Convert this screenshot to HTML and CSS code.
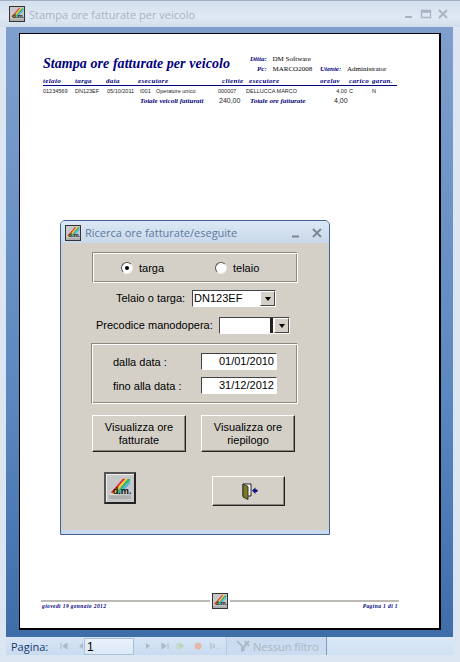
FILE: index.html
```html
<!DOCTYPE html>
<html lang="it">
<head>
<meta charset="utf-8">
<title>Stampa ore fatturate per veicolo</title>
<link rel="stylesheet" href="styles.css">
</head>
<body>
<svg class="defs" width="0" height="0" aria-hidden="true">
  <symbol id="dm" viewBox="0 0 24 24">
    <rect x="0" y="0" width="24" height="24" fill="#c8c8c8"/>
    <path d="M1 19 L17 2 L23 2 L23 6 L8 19 Z" fill="#e8e8e8"/>
    <path d="M2 17 L15 2 L18 2 L4 18 Z" fill="#e03040"/>
    <path d="M4 18 L18 2 L20.500 2 L7 18 Z" fill="#f0d020"/>
    <path d="M7 18 L20.500 2 L23 2 L23 4 L10 18 Z" fill="#40b070"/>
    <path d="M10 18 L23 4 L23 7 L13 18 Z" fill="#50b8e8"/>
    <text x="4" y="18" class="dm-text">d.m.</text>
    <rect x="0" y="20" width="24" height="4" fill="#b0b0b0"/>
  </symbol>
</svg>

<div class="window">
  <header class="titlebar">
    <span class="app-icon"><svg class="dm-svg"><use href="#dm"/></svg></span>
    <span class="title-text">Stampa ore fatturate per veicolo</span>
    <span class="win-controls">
      <svg class="ctl" viewBox="0 0 12 12"><path d="M2 9h7" stroke="#a9b4c2" stroke-width="2"/></svg>
      <svg class="ctl" viewBox="0 0 12 12"><path d="M1.500 2.500h9v7h-9z M1.500 4h9" fill="none" stroke="#a9b4c2" stroke-width="1.300"/></svg>
      <svg class="ctl" viewBox="0 0 12 12"><path d="M2 2l8 8M10 2l-8 8" stroke="#a9b4c2" stroke-width="2"/></svg>
    </span>
  </header>

  <main class="workspace">
    <section class="page">
      <div class="report-head">
        <h1 class="report-title">Stampa ore fatturate per veicolo</h1>
        <div class="meta">
          <div class="meta-line meta-first"><i>Ditta:</i> <span>DM Software</span></div>
          <div class="meta-line meta-second"><i>Pc:</i> <span>MARCO2008</span> <i class="gap">Utente:</i> <span>Administrator</span></div>
        </div>
      </div>
      <div class="rgrid rhead">
        <span>telaio</span><span>targa</span><span>data</span><span>esecutore</span><span>cliente</span><span>esecutore</span><span>orelav</span><span>carico</span><span>garan.</span>
      </div>
      <div class="rgrid rdata">
        <span>01234569</span><span>DN123EF</span><span>05/10/2011</span><span>I001</span><span>Operatore unico</span><span>000007</span><span>DELLUCCA MARCO</span><span class="num">4,00</span><span class="empty"></span><span>C</span><span>N</span>
      </div>
      <div class="rgrid rtotal">
        <i class="tot-label tot-a">Totale veicoli fatturati</i><span>240,00</span><i class="tot-label">Totale ore fatturate</i><span>4,00</span>
      </div>
      <footer class="report-foot">
        <div class="foot-rule">
          <span class="rule"></span>
          <svg class="dm-svg foot-logo"><use href="#dm"/></svg>
          <span class="rule"></span>
        </div>
        <div class="foot-text"><i>giovedì 19 gennaio 2012</i><i>Pagina 1 di 1</i></div>
      </footer>
    </section>
  </main>

  <nav class="navbar">
    <span class="nav-label">Pagina:</span>
    <span class="nav-arrows nav-left">
      <svg class="nav-ic" viewBox="0 0 10 10"><path d="M2 2v6M8 2L4 5l4 3z" fill="#a9b8cc" stroke="#a9b8cc"/></svg>
      <svg class="nav-ic" viewBox="0 0 10 10"><path d="M7 2L3 5l4 3z" fill="#a9b8cc"/></svg>
    </span>
    <span class="nav-input">1</span>
    <span class="nav-arrows nav-right">
      <svg class="nav-ic" viewBox="0 0 10 10"><path d="M3 2l4 3-4 3z" fill="#a9b8cc"/></svg>
      <svg class="nav-ic" viewBox="0 0 10 10"><path d="M8 2v6M2 2l4 3-4 3z" fill="#a9b8cc" stroke="#a9b8cc"/></svg>
      <svg class="nav-ic" viewBox="0 0 10 10"><path d="M1 2v6M3 2l5 3-5 3z" fill="#bcd6b8" stroke="#bcd6b8"/></svg>
      <svg class="nav-ic" viewBox="0 0 10 10"><circle cx="5" cy="5" r="3.500" fill="#e5b9a8"/></svg>
      <svg class="nav-ic" viewBox="0 0 10 10"><path d="M2 2v6M5 3v4M8 8h1" stroke="#a9b8cc" stroke-width="1.200"/></svg>
    </span>
    <span class="nav-filter">
      <svg class="filter-ic" viewBox="0 0 14 14"><path d="M1 2l5 5v5l2-1V7l2-2M9 2l4 5M13 2L9 7" fill="none" stroke="#a9b4c2" stroke-width="1.600"/></svg>
      <span>Nessun filtro</span>
    </span>
    <span class="nav-rest"></span>
  </nav>

  <div class="dialog">
    <div class="dlg-title">
      <span class="app-icon dlg-icon"><svg class="dm-svg"><use href="#dm"/></svg></span>
      <span class="dlg-title-text">Ricerca ore fatturate/eseguite</span>
      <span class="dlg-ctls">
        <svg class="ctl" viewBox="0 0 12 12"><path d="M2 9.500h7" stroke="#7d8794" stroke-width="2"/></svg>
        <svg class="ctl" viewBox="0 0 12 12"><path d="M2 2l8 8M10 2l-8 8" stroke="#7d8794" stroke-width="2"/></svg>
      </span>
    </div>
    <div class="dlg-body">
      <div class="group radio-group">
        <label class="radio"><span class="dot on"></span>targa</label>
        <label class="radio"><span class="dot"></span>telaio</label>
      </div>
      <div class="field field-targa">
        <span class="label">Telaio o targa:</span>
        <span class="combo combo-targa"><span class="combo-val">DN123EF</span><span class="combo-btn"></span></span>
      </div>
      <div class="field field-prec">
        <span class="label">Precodice manodopera:</span>
        <span class="combo combo-prec"><span class="combo-val caret"></span><span class="combo-btn"></span></span>
      </div>
      <div class="group date-group">
        <div class="date-row"><span class="date-label">dalla data :</span><span class="date-in">01/01/2010</span></div>
        <div class="date-row"><span class="date-label">fino alla data :</span><span class="date-in">31/12/2012</span></div>
      </div>
      <div class="btn-row">
        <button class="btn btn-a">Visualizza ore fatturate</button>
        <button class="btn btn-b">Visualizza ore riepilogo</button>
      </div>
      <div class="tool-row">
        <button class="logo-btn"><svg class="dm-svg"><use href="#dm"/></svg></button>
        <button class="btn door-btn">
          <svg class="door" viewBox="0 0 18 18">
            <path d="M3 2h8v12H3z" fill="#fff" stroke="#222" stroke-width="1"/>
            <path d="M3 2l5 2.500v13L3 15z" fill="#7d7a22" stroke="#333" stroke-width="1"/>
            <path d="M12 8.500l3.500-3v2h2v2.500h-2v2z" fill="#101080"/>
          </svg>
        </button>
      </div>
    </div>
  </div>
</div>
</body>
</html>
```

FILE: styles.css
```css
* { box-sizing: border-box; }
html, body { margin: 0; padding: 0; }
body { width: 460px; height: 662px; overflow: hidden; font-family: "Liberation Sans", sans-serif; background: #d5e0ec; }
.defs { position: absolute; }
.dm-text { font: bold 10px "Liberation Sans", sans-serif; fill: #111; }
.dm-svg { display: block; width: 100%; height: 100%; }

.window { position: relative; width: 460px; height: 662px; display: flex; flex-direction: column; background: linear-gradient(#c9d5e4, #dbe6f2 6px); border-top: 1px solid #9fb0c4; }

.titlebar { flex: 0 0 26px; display: flex; align-items: center; padding: 0 11px 0 9px; background: linear-gradient(#d3dfed, #dfe9f4 60%, #d2deeb); }
.app-icon { display: block; width: 16px; height: 16px; border: 1px solid #333; background: #ccc; margin-right: 4px; }
.title-text { font: 11px "Open Sans", sans-serif; color: #a7b2c0; }
.win-controls { margin-left: auto; display: flex; gap: 5px; }
.ctl { width: 12px; height: 12px; display: block; }

.workspace { flex: 0 0 610px; margin: 0 7px 0 6px; padding: 6px 13px 0; background: linear-gradient(#7f9fcd, #5b88c0 60%, #3f6da8); }
.page { width: 422px; height: 597px; background: #fff; border: 1px solid #000; border-width: 1px 2px 2px 1px; padding: 22px 0 0 23px; display: flex; flex-direction: column; color: #000; }

.report-head { display: flex; height: 19px; }
.report-title { margin: 0; font: italic bold 14px/16px "Liberation Serif", serif; letter-spacing: 0.06px; color: #000080; white-space: nowrap; width: 206px; flex: none; }
.meta { font: 7px "Liberation Serif", serif; color: #000; margin-top: -1px; }
.meta i { color: #000080; font-weight: bold; }
.meta-line { white-space: nowrap; height: 10px; }
.meta-first { padding-left: 1px; }
.meta-second { padding-left: 8px; }
.meta span { margin-left: 4px; }
.meta .gap { margin-left: 6px; }

.rgrid { display: grid; white-space: nowrap; }
.rhead { width: 354px; font: italic bold 7px/10px "Liberation Serif", serif; color: #000080; letter-spacing: 0.35px; height: 11px; padding-top: 1px; border-bottom: 1px solid #000080; grid-template-columns: 32px 31px 32px 84px 27px 71px 29px 23px 1fr; }
.rdata { width: 354px; font: 5.500px "Liberation Sans", sans-serif; color: #222; padding-top: 2px; height: 10px; grid-template-columns: 32px 32px 33px 16px 62px 28px 60px 41px 2px 23px 1fr; }
.rdata .num { text-align: right; }
.rtotal { width: 354px; font: 7px "Liberation Sans", sans-serif; height: 11px; padding-top: 1px; color: #222; grid-template-columns: 176px 31px 84px 1fr; }
.tot-label { color: #000080; font: italic bold 7px "Liberation Serif", serif; }
.tot-a { padding-left: 97px; }

.report-foot { margin: auto 0 19px -2px; width: 358px; }
.foot-rule { display: flex; align-items: center; height: 16px; }
.rule { flex: 1; height: 2px; background: #bdbab5; }
.foot-logo { width: 16px; height: 16px; border: 1px solid #333; margin: 0 2px; flex: none; }
.foot-text { display: flex; justify-content: space-between; margin-top: -6px; font: italic bold 5.500px "Liberation Serif", serif; letter-spacing: 0.4px; color: #000080; padding: 0 1px; }

.navbar { flex: 0 0 18px; margin: 0 7px 0 6px; display: flex; align-items: center; background: linear-gradient(#d7e5f5, #c9dbf0); }
.nav-label { font: 11px "Open Sans", sans-serif; width: 45px; flex: none; padding-left: 5px; color: #15396b; }
.nav-arrows { display: flex; flex: none; }
.nav-ic { width: 10px; height: 10px; display: block; flex: none; }
.nav-left { gap: 7px; margin-left: 8px; width: 25px; }
.nav-input { width: 50px; height: 17px; flex: none; border: 1px solid #a9c0db; background: linear-gradient(#eaf2fb, #dbe8f6); font: 12px "Liberation Sans", sans-serif; color: #000; padding: 1px 0 0 2px; }
.nav-right { gap: 6.500px; margin-left: 9px; width: 83px; }
.nav-filter { display: flex; align-items: center; gap: 3px; flex: none; width: 101px; height: 18px; font: 11px "Open Sans", sans-serif; color: #a9b4c2; white-space: nowrap; background: #ccdcf0; padding-left: 9px; border-left: 1px solid #b5c8df; border-right: 1px solid #7d9cc0; }
.filter-ic { width: 14px; height: 14px; }
.nav-rest { flex: 1; height: 18px; background: linear-gradient(#dbe9f8, #cfe0f4); }

.dialog { position: absolute; left: 60px; top: 219px; width: 270px; height: 315px; border: 1px solid #3f6193; border-radius: 5px 5px 0 0; background: #d4d0c8; display: flex; flex-direction: column; }
.dlg-title { flex: 0 0 22px; display: flex; align-items: center; padding: 1px 6px 0 4px; background: linear-gradient(#dbe7f4, #c9d8ea); border-radius: 4px 4px 0 0; }
.dlg-icon { margin-right: 4px; }
.dlg-title-text { font: 11px "Open Sans", sans-serif; color: #5a7aa0; }
.dlg-ctls { margin-left: auto; display: flex; gap: 9px; }
.dlg-body { flex: 1; border-bottom: 4px solid #c9d8ea; background: #d4d0c8; padding: 9px 0 0 31px; font: 11px "Liberation Sans", sans-serif; color: #000; }

.group { width: 206px; border: 1px solid; border-color: #8a887f #fff #fff #8a887f; box-shadow: inset 1px 1px 0 #fff, inset -1px -1px 0 #8a887f; }
.radio-group { height: 31px; display: flex; align-items: center; padding-left: 28px; }
.radio { display: flex; align-items: center; gap: 6px; width: 94px; flex: none; }
.dot { width: 12px; height: 12px; border-radius: 50%; background: #fff; border: 1px solid; border-color: #555 #eee #eee #555; display: flex; align-items: center; justify-content: center; }
.dot.on::after { content: ""; width: 4px; height: 4px; border-radius: 50%; background: #000; }

.field { display: flex; align-items: center; width: 206px; }
.field-targa { margin-top: 6px; height: 18px; padding-left: 24px; }
.field-prec { margin-top: 9px; height: 18px; padding-left: 4px; }
.label { white-space: nowrap; }
.combo { display: flex; height: 17px; flex: none; background: #fff; border: 1px solid; border-color: #444 #fff #fff #444; }
.combo-targa { width: 84px; margin-left: 7px; }
.combo-prec { width: 71px; margin-left: 6px; }
.combo-val { flex: 1; padding-left: 1px; line-height: 15px; overflow: hidden; }
.caret { border-right: 3px solid #222; margin-right: 1px; }
.combo-btn { width: 15px; background: #d4d0c8; border: 1px solid; border-color: #fff #444 #444 #fff; position: relative; }
.combo-btn::after { content: ""; position: absolute; left: 4px; top: 5px; border: 3px solid transparent; border-top: 4px solid #000; border-bottom: 0; }

.date-group { width: 207px; margin: 9px 0 0 -1px; height: 61px; padding: 9px 0 0 21px; }
.date-row { display: flex; align-items: center; height: 17px; }
.date-row + .date-row { margin-top: 7px; }
.date-label { width: 88px; white-space: nowrap; }
.date-in { width: 76px; height: 17px; background: #fff; border: 1px solid; border-color: #444 #fff #fff #444; text-align: right; padding-right: 2px; line-height: 15px; }

.btn { font: 11px "Liberation Sans", sans-serif; color: #000; background: #d4d0c8; border: 1px solid; border-color: #fff #222 #222 #fff; box-shadow: inset -1px -1px 0 #8a887f; padding: 0; }
.btn-row { display: flex; margin-top: 11px; gap: 15px; }
.btn-a, .btn-b { width: 94px; height: 37px; line-height: 13px; padding: 0 8px; }
.tool-row { display: flex; align-items: flex-start; margin-top: 20px; padding-left: 12px; }
.logo-btn { width: 32px; height: 32px; padding: 3px; background: #c8c8c8; border: 2px solid; border-color: #555 #222 #222 #555; box-shadow: inset 1px 1px 0 #eee; }
.door-btn { width: 73px; height: 30px; margin-left: 76px; margin-top: 4px; display: flex; align-items: center; justify-content: center; }
.door { width: 18px; height: 18px; display: block; }
```
